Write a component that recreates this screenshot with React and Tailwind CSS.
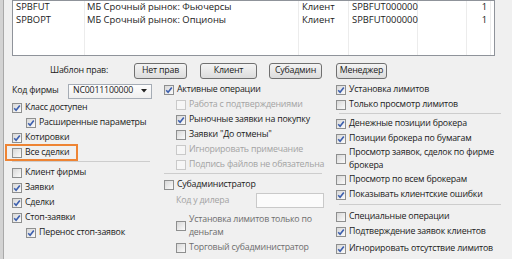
import React from "react";

const rows = [
  { code: "SPBFUT", name: "МБ Срочный рынок: Фьючерсы", role: "Клиент", acc: "SPBFUT000000", n: "1" },
  { code: "SPBOPT", name: "МБ Срочный рынок: Опционы", role: "Клиент", acc: "SPBFUT000000", n: "1" },
];

const cols = [
  { key: "code", w: "w-[72px] pl-[3px]" },
  { key: "name", w: "w-[214px] pl-[2px]" },
  { key: "role", w: "w-[50px] pl-[3px]" },
  { key: "acc", w: "w-[69px] pl-[3px]" },
  { key: "empty", w: "w-[49px]" },
  { key: "n", w: "w-[24px] pr-[3px] text-right" },
];

const Box = ({ checked, disabled }) => (
  <span
    className={`flex h-[10px] w-[10px] shrink-0 items-center justify-center border ${
      disabled
        ? "border-[#c9c9c9] bg-[#f6f6f6]"
        : "border-[#8e8f8f] bg-gradient-to-br from-[#d8d8d8] to-[#fbfbfb]"
    }`}
  >
    {checked && (
      <svg width="8" height="8" viewBox="0 0 8 8">
        <path d="M1.2 4.2 L3.1 6.3 L6.8 1.4" fill="none" stroke="#3c5fae" strokeWidth="1.6" />
      </svg>
    )}
  </span>
);

const Check = ({ label, checked, disabled, dim, className = "" }) => (
  <div className={`flex h-[15px] items-center gap-[3px] whitespace-nowrap ${className}`}>
    <Box checked={checked} disabled={disabled} />
    <span className={disabled ? "text-[#a3a3a3]" : dim ? "text-[#6e6e6e]" : ""}>{label}</span>
  </div>
);

const Check2 = ({ lines, checked, dim, className = "" }) => (
  <div className={`flex items-center gap-[3px] whitespace-nowrap ${className}`}>
    <Box checked={checked} />
    <div className={`leading-[13px] ${dim ? "text-[#6e6e6e]" : ""}`}>
      {lines.map((l) => (
        <div key={l}>{l}</div>
      ))}
    </div>
  </div>
);

const Btn = ({ children, w }) => (
  <div
    className={`flex h-[16px] items-center justify-center rounded-[3px] border border-[#707070] bg-gradient-to-b from-[#f4f4f4] to-[#dcdcdc] ${w}`}
  >
    {children}
  </div>
);

const Sep = ({ className = "" }) => <div className={`h-px bg-[#cdcdcd] ${className}`} />;

export default function App() {
  return (
    <div className="flex h-[259px] w-[512px] overflow-hidden bg-[#f0f0f0] font-['Open_Sans',sans-serif] text-[8.8px] tracking-[-0.2px] text-[#1b1b1b]">
      <div className="w-[3px] shrink-0 bg-[#d3d3d3]" />
      <div className="w-px shrink-0 bg-[#a9a9a9]" />
      <div className="flex-1 pl-[8px]">
        {/* list of markets */}
        <div className="flex h-[56px] w-[483px] border-x border-b border-t border-[#8f939a] bg-white text-[9.4px] tracking-normal">
          {cols.map((c) => (
            <div key={c.key} className={`h-full shrink-0 border-r border-[#ececec] ${c.w}`}>
              {rows.map((r, i) => (
                <div key={i} className="flex h-[13px] items-center justify-[inherit]">
                  <span className={c.key === "n" ? "ml-auto" : ""}>{r[c.key]}</span>
                </div>
              ))}
            </div>
          ))}
        </div>

        {/* template buttons */}
        <div className="mt-[7px] flex h-[16px] items-center">
          <div className="ml-[38px] w-[84px]">Шаблон прав:</div>
          <Btn w="w-[53px]">Нет прав</Btn>
          <Btn w="ml-[13px] w-[57px]">Клиент</Btn>
          <Btn w="ml-[12px] w-[53px]">Субадмин</Btn>
          <Btn w="ml-[14px] w-[51px]">Менеджер</Btn>
        </div>

        <div className="mt-[3px] flex">
          {/* left column */}
          <div className="w-[151px] shrink-0">
            <div className="flex h-[18px] items-center">
              <span className="w-[56px]">Код фирмы</span>
              <div className="flex h-[15px] w-[84px] items-center justify-between border border-[#a5acb5] bg-gradient-to-b from-[#fdfdfd] to-[#efefef] pl-[4px] pr-[4px]">
                <span>NC0011100000</span>
                <svg width="6" height="4" viewBox="0 0 6 4">
                  <path d="M0 0 H6 L3 3.5 Z" fill="#222" />
                </svg>
              </div>
            </div>
            <Check label="Класс доступен" checked />
            <Check label="Расширенные параметры" checked className="pl-[14px]" />
            <Check label="Котировки" checked />
            <div className="relative">
              <Check label="Все сделки" />
              <div className="absolute -left-[7px] -top-px h-[17px] w-[73px] border-2 border-[#ee8434]" />
            </div>
            <Sep className="mt-px mb-[3px] w-[138px]" />
            <Check label="Клиент фирмы" />
            <Check label="Заявки" checked />
            <Check label="Сделки" checked />
            <Check label="Стоп-заявки" checked />
            <Check label="Перенос стоп-заявок" checked className="pl-[14px]" />
          </div>

          {/* middle column */}
          <div className="w-[173px] shrink-0 pl-[1px]">
            <Check label="Активные операции" checked />
            <Check label="Работа с подтверждениями" disabled className="pl-[12px]" />
            <Check label="Рыночные заявки на покупку" checked className="pl-[12px]" />
            <Check label='Заявки "До отмены"' className="pl-[12px]" />
            <Check label="Игнорировать примечание" disabled className="pl-[12px]" />
            <Check label="Подпись файлов не обязательна" disabled className="pl-[12px]" />
            <Sep className="mt-px mb-[3px] w-[158px]" />
            <Check label="Субадминистратор" />
            <div className="flex h-[17px] items-center pl-[12px]">
              <span className="w-[80px] text-[#a3a3a3]">Код у дилера</span>
              <div className="h-[15px] w-[68px] border border-[#c9c9c9] bg-[#fbfbfb]" />
            </div>
            <Check2 lines={["Установка лимитов только по", "деньгам"]} dim className="mt-[4px] pl-[12px]" />
            <Check label="Торговый субадминистратор" dim className="mt-px pl-[12px]" />
            <Check label="Просмотр лимитов клиентов" dim className="mt-[2px] pl-[12px]" />
          </div>

          {/* right column */}
          <div className="flex-1">
            <Check label="Установка лимитов" checked />
            <Check label="Только просмотр лимитов" />
            <Sep className="mt-px mb-[2px] ml-[3px] w-[162px]" />
            <Check label="Денежные позиции брокера" checked />
            <Check label="Позиции брокера по бумагам" checked />
            <Check2 lines={["Просмотр заявок, сделок по фирме", "брокера"]} />
            <Check label="Просмотр по всем брокерам" />
            <Check label="Показывать клиентские ошибки" checked />
            <Sep className="mt-[2px] mb-[4px] ml-[3px] w-[162px]" />
            <Check label="Специальные операции" />
            <Check label="Подтверждение заявок клиентов" checked />
            <Check label="Игнорировать отсутствие лимитов" checked className="mt-[2px]" />
          </div>
        </div>
      </div>
    </div>
  );
}
